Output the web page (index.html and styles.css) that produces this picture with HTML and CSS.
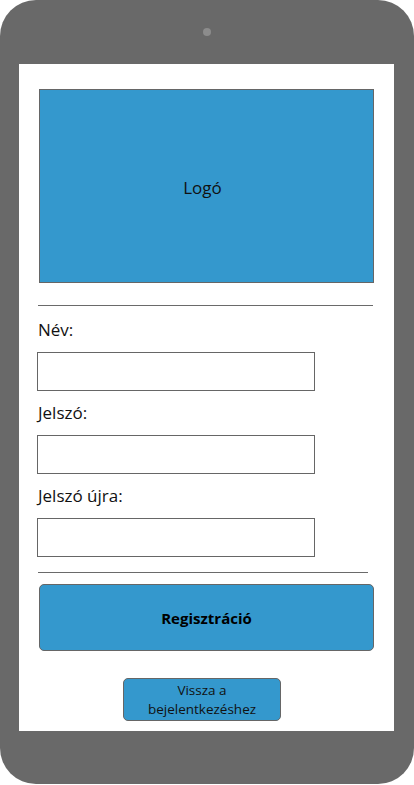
FILE: index.html
```html
<!DOCTYPE html>
<html lang="hu">
<head>
<meta charset="utf-8">
<title>Regisztráció</title>
<link rel="stylesheet" href="styles.css">
</head>
<body>
<div class="device">
  <div class="camera"></div>
  <div class="screen">
    <div class="logo">Logó</div>
    <div class="rule rule-top"></div>
    <div class="fields">
      <div class="field">
        <label class="label">Név:</label>
        <div class="input"></div>
      </div>
      <div class="field">
        <label class="label">Jelszó:</label>
        <div class="input"></div>
      </div>
      <div class="field">
        <label class="label">Jelszó újra:</label>
        <div class="input"></div>
      </div>
    </div>
    <div class="rule rule-bottom"></div>
    <div class="btn-register">Regisztráció</div>
    <div class="btn-back">Vissza a bejelentkezéshez</div>
  </div>
</div>
</body>
</html>
```

FILE: styles.css
```css
html, body {
  margin: 0;
  padding: 0;
  background: #ffffff;
}

body {
  font-family: "Open Sans", "Noto Sans", sans-serif;
  color: #111111;
}

.device {
  width: 414px;
  height: 784px;
  background: #696969;
  border-radius: 36px;
  box-sizing: border-box;
  padding-top: 28px;
  padding-left: 19px;
  display: flex;
  flex-direction: column;
  align-items: flex-start;
}

.camera {
  width: 8px;
  height: 8px;
  border-radius: 50%;
  background: #8c8c8c;
  margin-left: 184px;
  margin-bottom: 28px;
}

.screen {
  width: 375px;
  height: 667px;
  background: #ffffff;
  box-sizing: border-box;
  padding-top: 25px;
  display: flex;
  flex-direction: column;
  overflow: hidden;
}

.logo {
  margin-left: 20px;
  width: 335px;
  height: 194px;
  box-sizing: border-box;
  border: 1px solid #666666;
  background: #3498cd;
  display: flex;
  align-items: center;
  justify-content: center;
  font-size: 17px;
  padding-top: 2px;
  padding-right: 8px;
}

.rule {
  height: 1px;
  background: #6a6a6a;
  margin-left: 19px;
}

.rule-top {
  width: 335px;
  margin-top: 22px;
}

.fields {
  display: flex;
  flex-direction: column;
  gap: 10px;
  margin-top: 12px;
  padding-left: 18px;
}

.field {
  display: flex;
  flex-direction: column;
}

.label {
  height: 24px;
  line-height: 24px;
  font-size: 17px;
  margin-bottom: 10px;
  padding-left: 1px;
}

.input {
  width: 278px;
  height: 39px;
  box-sizing: border-box;
  border: 1px solid #666666;
  background: #ffffff;
}

.rule-bottom {
  width: 330px;
  margin-top: 15px;
}

.btn-register {
  margin-top: 11px;
  margin-left: 20px;
  width: 335px;
  height: 67px;
  box-sizing: border-box;
  border: 1px solid #666666;
  border-radius: 5px;
  background: #3498cd;
  display: flex;
  align-items: center;
  justify-content: center;
  font-weight: 700;
  font-size: 15px;
  color: #000000;
}

.btn-back {
  margin-top: 27px;
  margin-left: 104px;
  width: 158px;
  height: 43px;
  box-sizing: border-box;
  border: 1px solid #666666;
  border-radius: 5px;
  background: #3498cd;
  text-align: center;
  font-size: 13.5px;
  line-height: 18.5px;
  padding: 2px 16px 0;
  color: #111111;
}
```
